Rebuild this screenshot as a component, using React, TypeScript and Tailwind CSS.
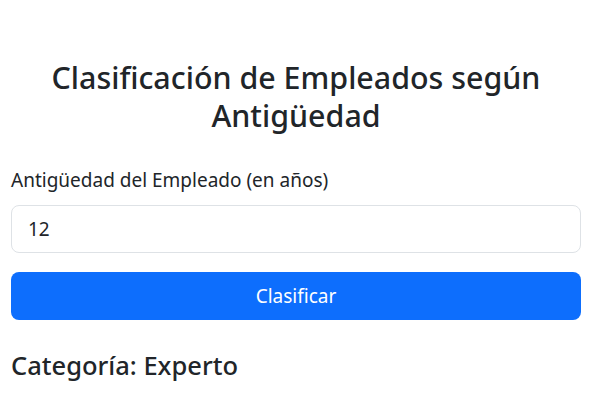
import React, { useState } from 'react';

const getCategoria = (anios: number) => {
  if (anios < 1) return 'Principiante';
  if (anios <= 3) return 'Intermedio';
  if (anios <= 10) return 'Avanzado';
  return 'Experto';
};

export default function App() {
  const [antiguedad, setAntiguedad] = useState('12');
  const [categoria, setCategoria] = useState(getCategoria(12));

  return (
    <div className="min-h-screen bg-white px-[11px] pt-[59px] text-[#212529] [font-family:'Noto_Sans',sans-serif]">
      <h2 className="text-center text-[30.4px] font-medium leading-[38.4px]">
        Clasificación de Empleados según Antigüedad
      </h2>

      <div className="mt-[29px]">
        <label className="mb-[10px] block text-[19px] leading-[30px]">Antigüedad del Empleado (en años)</label>
        <input
          type="number"
          value={antiguedad}
          onChange={(e) => setAntiguedad(e.target.value)}
          className="block h-12 w-full rounded-lg border border-[#dee2e6] px-4 text-[19px] text-[#212529] outline-none"
        />
      </div>

      <button
        onClick={() => setCategoria(getCategoria(Number(antiguedad)))}
        className="mt-[19px] block h-12 w-full rounded-lg bg-[#0d6efd] text-[19px] text-white"
      >
        Clasificar
      </button>

      <h4 className="mt-[31px] text-[25.5px] font-medium leading-[28.8px]">Categoría: {categoria}</h4>
    </div>
  );
}
